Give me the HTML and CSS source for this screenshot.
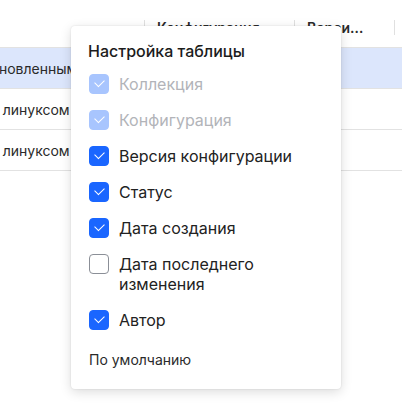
FILE: index.html
```html
<!DOCTYPE html>
<html lang="ru">
<head>
    <meta charset="UTF-8">
    <meta name="viewport" content="width=device-width, initial-scale=1.0">
    <title>Настройка таблицы</title>
    <link rel="stylesheet" href="styles.css">
</head>
<body>
    <div class="page">
        <!-- Table (scrolled horizontally) -->
        <div class="table">
            <div class="row head">
                <div class="cell col-name"></div>
                <div class="cell col-config"><span class="title">Конфигурация</span></div>
                <div class="cell col-version"><span class="title clip">Версия конфигурации</span></div>
                <div class="cell col-rest"></div>
            </div>
            <div class="row selected">
                <div class="cell col-name">Диск с предустановленным ПО</div>
                <div class="cell col-config"></div>
                <div class="cell col-version"></div>
                <div class="cell col-rest"></div>
            </div>
            <div class="row">
                <div class="cell col-name">Базовый образ с линуксом</div>
                <div class="cell col-config"></div>
                <div class="cell col-version"></div>
                <div class="cell col-rest"></div>
            </div>
            <div class="row">
                <div class="cell col-name">Базовый образ с линуксом</div>
                <div class="cell col-config"></div>
                <div class="cell col-version"></div>
                <div class="cell col-rest"></div>
            </div>
        </div>

        <!-- Column settings popup -->
        <div class="popup">
            <div class="popup-title">Настройка таблицы</div>
            <ul class="options">
                <li class="option disabled"><span class="box checked"></span><span>Коллекция</span></li>
                <li class="option disabled"><span class="box checked"></span><span>Конфигурация</span></li>
                <li class="option"><span class="box checked"></span><span>Версия конфигурации</span></li>
                <li class="option"><span class="box checked"></span><span>Статус</span></li>
                <li class="option"><span class="box checked"></span><span>Дата создания</span></li>
                <li class="option"><span class="box"></span><span>Дата последнего<br>изменения</span></li>
                <li class="option"><span class="box checked"></span><span>Автор</span></li>
            </ul>
            <div class="reset">По умолчанию</div>
        </div>
    </div>
</body>
</html>
```

FILE: styles.css
```css
body {
    margin: 0;
    font-family: Inter, "Noto Sans", sans-serif;
    color: #222;
    background: #fff;
}

.page {
    position: relative;
    width: 402px;
    height: 418px;
    overflow: hidden;
}

.table {
    padding-top: 7px;
    margin-left: -132px;
    width: 600px;
}

.row {
    display: flex;
    height: 40px;
    border-bottom: 1px solid #e2e2e2;
    font-size: 14px;
}

.row.selected {
    background-color: #dce6fc;
}

.cell {
    display: flex;
    align-items: center;
    padding-left: 13px;
    box-sizing: border-box;
    white-space: nowrap;
    overflow: hidden;
    position: relative;
}

.col-name { width: 276px; padding-left: 16px; color: #2a2a2a; }
.col-config { width: 150px; }
.col-version { width: 100px; }
.col-rest { flex: 1; }

.head .cell + .cell::before {
    content: "";
    position: absolute;
    left: 0;
    top: 13px;
    height: 15px;
    border-left: 1px solid #e0e0e0;
}

.head .title {
    font-weight: 600;
    color: #2a2a2a;
}

.head .clip {
    width: 57px;
    overflow: hidden;
    text-overflow: ellipsis;
}

.popup {
    position: absolute;
    left: 71px;
    top: 26px;
    width: 270px;
    box-sizing: border-box;
    padding: 15px 17px 19px 18px;
    background: #fff;
    border-radius: 4px;
    box-shadow: 0 3px 12px rgba(0, 0, 0, 0.14), 0 0 2px rgba(0, 0, 0, 0.12);
}

.popup-title {
    font-size: 16px;
    line-height: 20px;
    font-weight: 500;
    color: #1c1c1c;
    margin-left: -1px;
}

.options {
    list-style: none;
    margin: 13px 0 0;
    padding: 0;
    display: flex;
    flex-direction: column;
    gap: 16px;
}

.option {
    display: flex;
    gap: 10px;
    font-size: 16px;
    line-height: 20px;
    color: #222;
}

.option.disabled {
    color: #b2b4b9;
}

.box {
    flex: none;
    width: 20px;
    height: 20px;
    box-sizing: border-box;
    border: 1.5px solid #8b8f97;
    border-radius: 4px;
    position: relative;
}

.box.checked {
    background: #1a66ff;
    border-color: #1a66ff;
}

.box.checked::after {
    content: "";
    position: absolute;
    top: 4px;
    left: 4.5px;
    width: 8px;
    height: 5px;
    border-left: 1.6px solid #fff;
    border-bottom: 1.6px solid #fff;
    transform: rotate(-45deg);
}

.option.disabled .box.checked {
    background: #a8c5fe;
    border-color: #a8c5fe;
}

.reset {
    margin-top: 20px;
    font-size: 14px;
    line-height: 20px;
    color: #2a2a2a;
}
```
